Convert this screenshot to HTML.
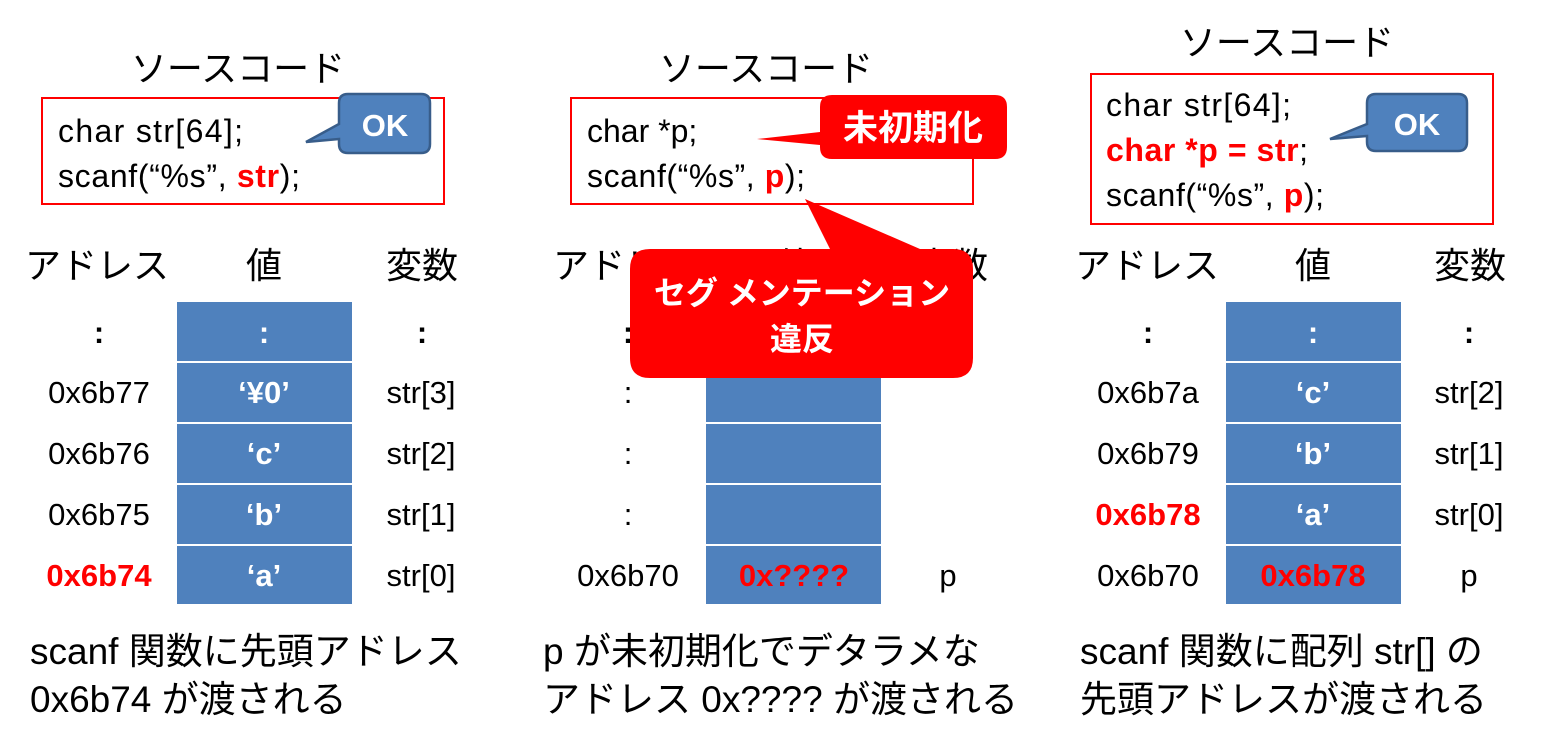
<!DOCTYPE html>
<html><head><meta charset="utf-8"><style>
html,body{margin:0;padding:0;background:#fff;}
svg{display:block;}
text{font-family:"Liberation Sans","Noto Sans CJK JP",sans-serif;}
.t{font-size:36px;fill:#000;}
.c{font-size:32px;fill:#000;}
.r{fill:#f00;font-weight:bold;}
.w{fill:#fff;font-weight:bold;}
.m{font-size:31px;fill:#000;}
.b{font-size:37px;fill:#000;}
</style></head><body>
<svg width="1541" height="751" viewBox="0 0 1541 751" xmlns="http://www.w3.org/2000/svg">
<!-- Panel 1 -->
<text class="t" x="238" y="81" text-anchor="middle">ソースコード</text>
<rect x="42" y="98" width="402" height="106" fill="#fff" stroke="#f00" stroke-width="2"/>
<text class="c" x="58" y="142" textLength="185">char str[64];</text>
<text class="c" x="58" y="187" textLength="242">scanf(“%s”, <tspan class="r">str</tspan>);</text>
<path d="M348,94 H421 Q430,94 430,103 V144 Q430,153 421,153 H348 Q339,153 339,144 V139 L306,142 L339,124 V103 Q339,94 348,94 Z" fill="#4f81bd" stroke="#385d8a" stroke-width="2.5"/>
<text x="385" y="136" font-size="31" text-anchor="middle" class="w">OK</text>

<text class="t" x="25" y="278">アドレス</text>
<text class="t" x="264" y="278" text-anchor="middle">値</text>
<text class="t" x="422" y="278" text-anchor="middle">変数</text>
<g fill="#4f81bd">
<rect x="177" y="302" width="175" height="59"/>
<rect x="177" y="363" width="175" height="59"/>
<rect x="177" y="424" width="175" height="59"/>
<rect x="177" y="485" width="175" height="59"/>
<rect x="177" y="546" width="175" height="58"/>
</g>
<g class="m" text-anchor="middle">
<text x="99" y="343" font-weight="bold">:</text><text x="264" y="343" class="w">:</text><text x="422" y="343" font-weight="bold">:</text>
<text x="99" y="403">0x6b77</text><text x="264" y="403" class="w">‘¥0’</text><text x="421" y="403">str[3]</text>
<text x="99" y="464">0x6b76</text><text x="264" y="464" class="w">‘c’</text><text x="421" y="464">str[2]</text>
<text x="99" y="525">0x6b75</text><text x="264" y="525" class="w">‘b’</text><text x="421" y="525">str[1]</text>
<text x="99" y="586" class="r">0x6b74</text><text x="264" y="586" class="w">‘a’</text><text x="421" y="586">str[0]</text>
</g>
<text class="b" x="30" y="664">scanf 関数に先頭アドレス</text>
<text class="b" x="30" y="712">0x6b74 が渡される</text>

<!-- Panel 2 -->
<text class="t" x="766" y="81" text-anchor="middle">ソースコード</text>
<rect x="571" y="98" width="402" height="106" fill="#fff" stroke="#f00" stroke-width="2"/>
<text class="c" x="587" y="142">char *p;</text>
<text class="c" x="587" y="187" textLength="218">scanf(“%s”, <tspan class="r">p</tspan>);</text>

<text class="t" x="553" y="278">アドレス</text>
<text class="t" x="794" y="278" text-anchor="middle">値</text>
<text class="t" x="952" y="278" text-anchor="middle">変数</text>
<g fill="#4f81bd">
<rect x="706" y="302" width="175" height="59"/>
<rect x="706" y="363" width="175" height="59"/>
<rect x="706" y="424" width="175" height="59"/>
<rect x="706" y="485" width="175" height="59"/>
<rect x="706" y="546" width="175" height="58"/>
</g>
<g class="m" text-anchor="middle">
<text x="628" y="343" font-weight="bold">:</text>
<text x="628" y="403">:</text>
<text x="628" y="464">:</text>
<text x="628" y="525">:</text>
<text x="628" y="586">0x6b70</text><text x="794" y="586" class="r">0x????</text><text x="948" y="586">p</text>
</g>
<!-- 未初期化 callout -->
<path d="M832,95 H995 Q1007,95 1007,107 V147 Q1007,159 995,159 H832 Q820,159 820,147 V145 L757,139 L820,132 V107 Q820,95 832,95 Z" fill="#f00"/>
<text x="913" y="140" font-size="35" class="w" text-anchor="middle">未初期化</text>
<!-- Seg callout -->
<path d="M650,249 H830 L805,199 L920,249 H953 Q973,249 973,269 V358 Q973,378 953,378 H650 Q630,378 630,358 V269 Q630,249 650,249 Z" fill="#f00"/>
<text x="802" y="304" font-size="32" class="w" text-anchor="middle">セグ メンテーション</text>
<text x="802" y="350" font-size="32" class="w" text-anchor="middle">違反</text>
<text class="b" x="543" y="664">p が未初期化でデタラメな</text>
<text class="b" x="543" y="712">アドレス 0x???? が渡される</text>

<!-- Panel 3 -->
<text class="t" x="1287" y="55" text-anchor="middle">ソースコード</text>
<rect x="1091" y="74" width="402" height="150" fill="#fff" stroke="#f00" stroke-width="2"/>
<text class="c" x="1106" y="116" textLength="185">char str[64];</text>
<text class="c r" x="1106" y="161" textLength="202">char *p = str<tspan fill="#000" font-weight="normal">;</tspan></text>
<text class="c" x="1106" y="206" textLength="218">scanf(“%s”, <tspan class="r">p</tspan>);</text>
<path d="M1376,94 H1458 Q1467,94 1467,103 V142 Q1467,151 1458,151 H1376 Q1367,151 1367,142 V136 L1330,139 L1367,124 V103 Q1367,94 1376,94 Z" fill="#4f81bd" stroke="#385d8a" stroke-width="2.5"/>
<text x="1417" y="135" font-size="31" text-anchor="middle" class="w">OK</text>

<text class="t" x="1075" y="278">アドレス</text>
<text class="t" x="1313" y="278" text-anchor="middle">値</text>
<text class="t" x="1470" y="278" text-anchor="middle">変数</text>
<g fill="#4f81bd">
<rect x="1226" y="302" width="175" height="59"/>
<rect x="1226" y="363" width="175" height="59"/>
<rect x="1226" y="424" width="175" height="59"/>
<rect x="1226" y="485" width="175" height="59"/>
<rect x="1226" y="546" width="175" height="58"/>
</g>
<g class="m" text-anchor="middle">
<text x="1148" y="343" font-weight="bold">:</text><text x="1313" y="343" class="w">:</text><text x="1469" y="343" font-weight="bold">:</text>
<text x="1148" y="403">0x6b7a</text><text x="1313" y="403" class="w">‘c’</text><text x="1469" y="403">str[2]</text>
<text x="1148" y="464">0x6b79</text><text x="1313" y="464" class="w">‘b’</text><text x="1469" y="464">str[1]</text>
<text x="1148" y="525" class="r">0x6b78</text><text x="1313" y="525" class="w">‘a’</text><text x="1469" y="525">str[0]</text>
<text x="1148" y="586">0x6b70</text><text x="1313" y="586" class="r">0x6b78</text><text x="1469" y="586">p</text>
</g>
<text class="b" x="1080" y="664">scanf 関数に配列 str[] の</text>
<text class="b" x="1080" y="712">先頭アドレスが渡される</text>
</svg>
</body></html>
